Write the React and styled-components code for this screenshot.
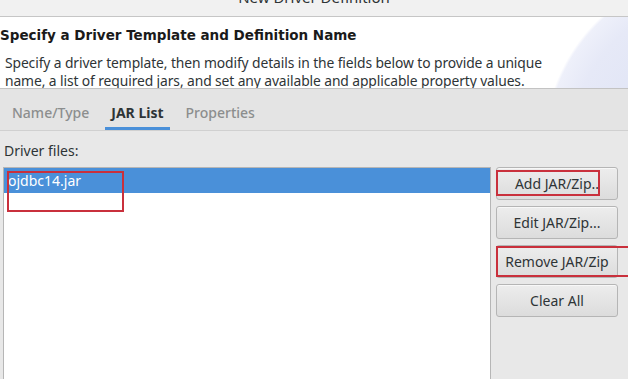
import React from "react";
import styled, { createGlobalStyle } from "styled-components";

const Global = createGlobalStyle`
  html, body { margin: 0; padding: 0; }
  body {
    background: #e8e8e8;
    font-family: "Noto Sans", "Open Sans", sans-serif;
    color: #2e3436;
    width: 628px;
    height: 379px;
    overflow: hidden;
  }
`;

const Window = styled.div`
  width: 628px;
  height: 379px;
  display: flex;
  flex-direction: column;
  overflow: hidden;
`;

const TitleBar = styled.div`
  height: 16px;
  flex: none;
  background: #f1f1f1;
  border-bottom: 1px solid #c6c6c6;
  display: flex;
  justify-content: center;
  align-items: flex-end;
  position: relative;
  overflow: hidden;
`;

const TitleText = styled.div`
  font-size: 15px;
  line-height: 16px;
  color: #2e3436;
  margin-bottom: 11px;
`;

const CloseGlyph = styled.div`
  position: absolute;
  right: 12px;
  bottom: 11px;
  font-size: 14px;
  line-height: 16px;
  font-weight: bold;
  color: #2e3436;
`;

const Header = styled.div`
  height: 72px;
  flex: none;
  background:
    radial-gradient(circle at 721px 130px, #d9dff3 0, #e6e9f7 150px, #eef0fa 174px, rgba(255,255,255,0) 177px),
    #ffffff;
  border-bottom: 1px solid #c3c3c3;
  padding-top: 9px;
  box-sizing: border-box;
  overflow: hidden;
`;

const Heading = styled.div`
  font-family: "DejaVu Sans", sans-serif;
  font-weight: bold;
  font-size: 13.5px;
  line-height: 18px;
  color: #1a1a1a;
`;

const Desc = styled.div`
  margin-top: 10px;
  padding-left: 5px;
  font-size: 13.85px;
  line-height: 18px;
  color: #2e3436;
  letter-spacing: -0.1px;
`;

const Body = styled.div`
  flex: 1;
  display: flex;
  flex-direction: column;
  background: #e8e8e8;
`;

const TabBar = styled.div`
  height: 42px;
  flex: none;
  display: flex;
  align-items: stretch;
  padding-left: 6px;
  gap: 10px;
  border-bottom: 1px solid #d0d0d0;
  box-sizing: border-box;
  background: #e4e4e4;
`;

const Tab = styled.div`
  padding: 8px 6px 0;
  display: flex;
  align-items: center;
  font-size: 14px;
  font-weight: ${(p) => (p.$active ? 700 : 500)};
  color: ${(p) => (p.$active ? "#2e3436" : "#8c8e8e")};
  border-bottom: 3px solid ${(p) => (p.$active ? "#4a90d9" : "transparent")};
  box-sizing: border-box;
`;

const Content = styled.div`
  flex: 1;
  display: flex;
  flex-direction: column;
  padding: 10px 0 0 3px;
`;

const Label = styled.div`
  font-size: 14px;
  line-height: 20px;
  padding-left: 1px;
  color: #2e3436;
`;

const Row = styled.div`
  margin-top: 6px;
  flex: 1;
  display: flex;
  gap: 5px;
  align-items: flex-start;
`;

const ListBox = styled.div`
  width: 488px;
  height: 220px;
  box-sizing: border-box;
  background: #ffffff;
  border: 1px solid #b6b6b6;
  border-bottom: none;
  position: relative;
`;

const ListItem = styled.div`
  height: 25px;
  display: flex;
  align-items: center;
  padding-left: 4px;
  font-size: 14px;
  color: ${(p) => (p.$selected ? "#ffffff" : "#2e3436")};
  background: ${(p) => (p.$selected ? "#4a90d9" : "transparent")};
`;

const Buttons = styled.div`
  display: flex;
  flex-direction: column;
  gap: 6px;
  width: 122px;
`;

const Button = styled.div`
  position: relative;
  height: 33px;
  box-sizing: border-box;
  border: 1px solid #b5b5b5;
  border-radius: 3px;
  background: linear-gradient(#ededed, #dcdcdc);
  box-shadow: 0 1px 0 rgba(255,255,255,0.6) inset;
  display: flex;
  align-items: center;
  justify-content: center;
  font-size: 14px;
  color: #2e3436;
`;

const Mark = styled.div`
  position: absolute;
  border: 2px solid #c9303c;
  box-sizing: border-box;
  pointer-events: none;
`;

export default function App() {
  return (
    <>
      <Global />
      <Window>
        <TitleBar>
          <TitleText>New Driver Definition</TitleText>
          <CloseGlyph>×</CloseGlyph>
        </TitleBar>
        <Header>
          <Heading>Specify a Driver Template and Definition Name</Heading>
          <Desc>
            Specify a driver template, then modify details in the fields below to provide a unique
            <br />
            name, a list of required jars, and set any available and applicable property values.
          </Desc>
        </Header>
        <Body>
          <TabBar>
            <Tab>Name/Type</Tab>
            <Tab $active>JAR List</Tab>
            <Tab>Properties</Tab>
          </TabBar>
          <Content>
            <Label>Driver files:</Label>
            <Row>
              <ListBox>
                <ListItem $selected>ojdbc14.jar</ListItem>
                <Mark style={{ left: 3, top: 3, width: 117, height: 41 }} />
              </ListBox>
              <Buttons>
                <Button>
                  Add JAR/Zip..
                  <Mark style={{ left: -1, top: 2, width: 104, height: 26 }} />
                </Button>
                <Button>Edit JAR/Zip...</Button>
                <Button>
                  Remove JAR/Zip
                  <Mark style={{ left: -1, top: 0, width: 140, height: 31 }} />
                </Button>
                <Button>Clear All</Button>
              </Buttons>
            </Row>
          </Content>
        </Body>
      </Window>
    </>
  );
}
